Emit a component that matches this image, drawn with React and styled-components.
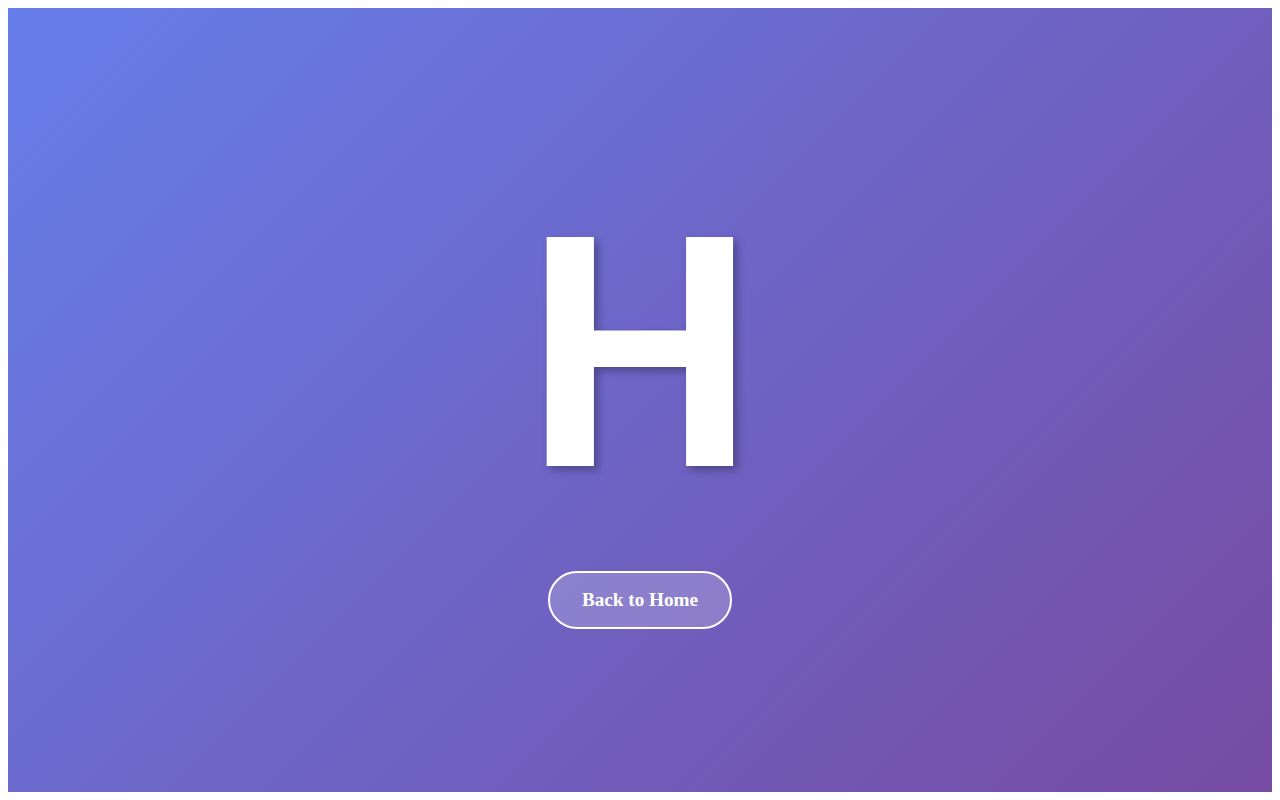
import React from "react";
import styled, { createGlobalStyle } from "styled-components";

const GlobalStyle = createGlobalStyle`
  body {
    margin: 8px;
    font-family: "Liberation Serif", "Times New Roman", serif;
  }
`;

const Page = styled.div`
  height: calc(100vh - 16px);
  box-sizing: border-box;
  padding-bottom: 4px;
  background: linear-gradient(135deg, #667eea 0%, #764ba2 100%);
  display: flex;
  flex-direction: column;
  align-items: center;
  justify-content: center;
`;

const Letter = styled.h1`
  margin: 0;
  font-family: Roboto, "Liberation Sans", sans-serif;
  font-size: 322px;
  font-weight: 700;
  line-height: normal;
  color: #fff;
  text-shadow: 4px 4px 8px rgba(0, 0, 0, 0.3);
`;

const HomeButton = styled.a`
  margin-top: 26px;
  padding: 16px 32px;
  font-size: 19.2px;
  font-weight: 700;
  color: #fff;
  text-decoration: none;
  background: rgba(255, 255, 255, 0.2);
  border: 2px solid #fff;
  border-radius: 50px;
  cursor: pointer;
`;

export default function App() {
  return (
    <>
      <GlobalStyle />
      <Page>
        <Letter>H</Letter>
        <HomeButton href="#">Back to Home</HomeButton>
      </Page>
    </>
  );
}
